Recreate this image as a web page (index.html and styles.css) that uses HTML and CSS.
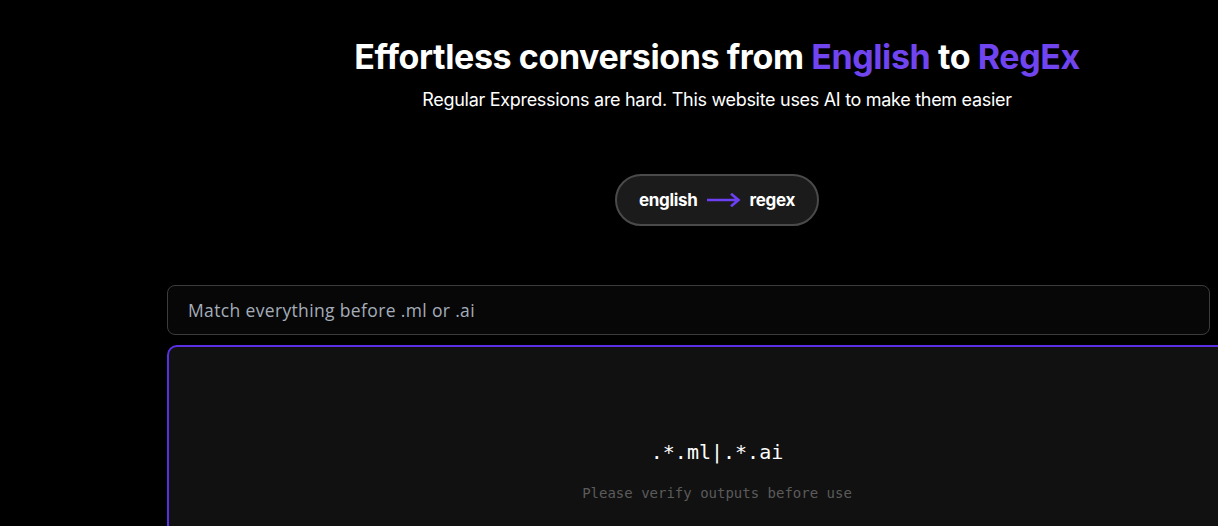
FILE: index.html
```html
<!DOCTYPE html>
<html lang="en">
<head>
<meta charset="utf-8">
<title>English to RegEx</title>
<link rel="stylesheet" href="styles.css">
</head>
<body>
<main class="page">
  <header class="hero">
    <h1 class="title">Effortless conversions from <span class="accent">English</span> to <span class="accent">RegEx</span></h1>
    <p class="subtitle">Regular Expressions are hard. This website uses AI to make them easier</p>
  </header>
  <div class="toggle-row">
    <button class="toggle">
      <span>english</span>
      <svg class="arrow" width="34" height="14" viewBox="0 0 34 14" aria-hidden="true">
        <path d="M1 7H31M25 1.5L31.5 7L25 12.5" fill="none" stroke="#6d3ff2" stroke-width="2.6" stroke-linecap="square"/>
      </svg>
      <span>regex</span>
    </button>
  </div>
  <section class="converter">
    <form class="query-row">
      <input class="query" type="text" placeholder="Match everything before .ml or .ai">
      <button class="go" type="button" aria-label="Convert"></button>
    </form>
    <div class="output">
      <code class="regex">.*.ml|.*.ai</code>
      <p class="note">Please verify outputs before use</p>
    </div>
  </section>
</main>
</body>
</html>
```

FILE: styles.css
```css
html, body {
  margin: 0;
  padding: 0;
  background: #000;
  overflow: hidden;
}
body {
  font-family: Inter, "Noto Sans", sans-serif;
  color: #fff;
}
.page {
  width: 1100px;
  margin-left: 167px;
  padding-top: 36px;
}
.hero {
  text-align: center;
}
.title {
  margin: 0;
  font-size: 34px;
  line-height: 42px;
  font-weight: 700;
  letter-spacing: -0.4px;
}
.accent {
  color: #7045f0;
}
.subtitle {
  margin: 10px 0 0;
  font-size: 18px;
  line-height: 24px;
  letter-spacing: -0.3px;
}
.toggle-row {
  display: flex;
  justify-content: center;
  margin-top: 62px;
}
.toggle {
  display: flex;
  align-items: center;
  gap: 9px;
  height: 52px;
  padding: 0 22px;
  border: 2px solid #4a4a4a;
  border-radius: 26px;
  background: #1b1b1b;
  color: #fff;
  font-family: Inter, "Noto Sans", sans-serif;
  font-size: 17px;
  font-weight: 700;
  letter-spacing: -0.3px;
}
.arrow {
  display: block;
}
.converter {
  margin-top: 59px;
}
.query-row {
  display: flex;
  gap: 10px;
  margin: 0;
}
.query {
  flex: 1;
  height: 50px;
  box-sizing: border-box;
  padding: 0 20px;
  border: 1px solid #3c3c3c;
  border-radius: 8px;
  background: #070707;
  color: #fff;
  font-family: "Open Sans", "Noto Sans", sans-serif;
  font-size: 17.5px;
  letter-spacing: 0.35px;
  outline: none;
}
.query::placeholder {
  color: #a4adb9;
}
.go {
  width: 47px;
  height: 50px;
  border: 1px solid #3c3c3c;
  border-radius: 8px;
  background: #070707;
}
.output {
  margin-top: 10px;
  box-sizing: border-box;
  height: 240px;
  border: 2px solid #5a2fe6;
  border-radius: 10px;
  background: #111;
  display: flex;
  flex-direction: column;
  align-items: center;
  padding-top: 92px;
}
.regex {
  font-family: "DejaVu Sans Mono", "Liberation Mono", monospace;
  font-size: 20px;
  line-height: 26px;
  color: #fff;
}
.note {
  margin: 20px 0 0;
  font-family: "DejaVu Sans Mono", "Liberation Mono", monospace;
  font-size: 14px;
  color: #5b5b5b;
}
```
